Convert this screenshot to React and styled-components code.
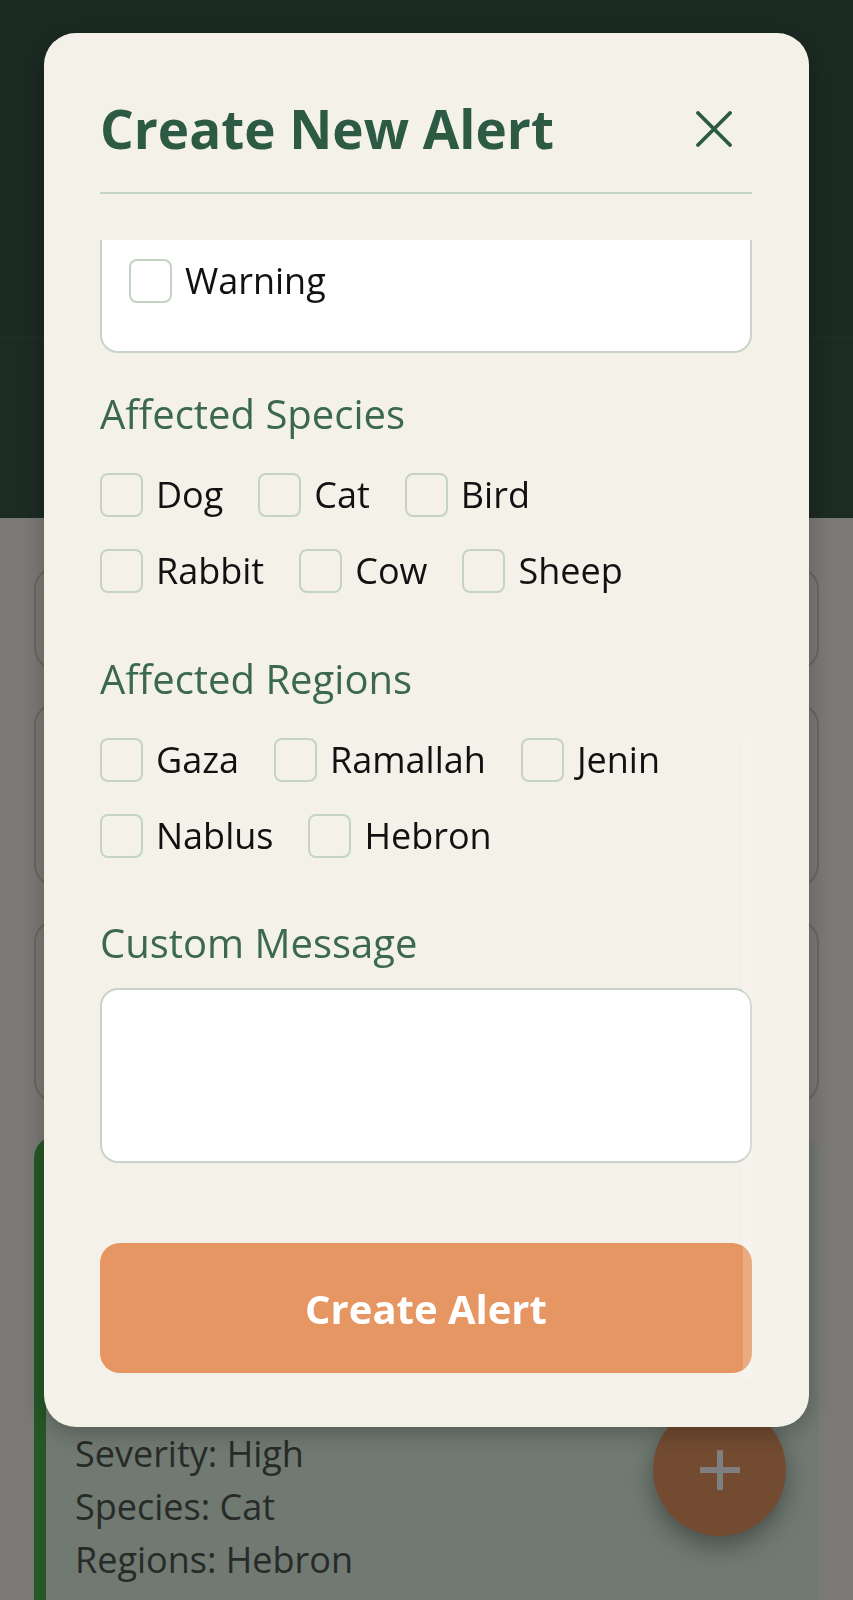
import React, { useLayoutEffect, useRef } from 'react';
import styled, { createGlobalStyle } from 'styled-components';

const GlobalStyle = createGlobalStyle`
  html, body {
    margin: 0;
    padding: 0;
    background: #f5f3ea;
    font-family: "Open Sans", "Noto Sans", sans-serif;
  }
  * { box-sizing: border-box; }
`;

const Page = styled.div`
  min-height: 1600px;
  background: #f5f3ea;
`;

const Header = styled.header`
  height: 337px;
  background: #365444;
  border-bottom: 1px solid rgba(255, 255, 255, 0.06);
`;

const Band = styled.div`
  height: 181px;
  background: #385646;
`;

const List = styled.div`
  display: flex;
  flex-direction: column;
  gap: 33px;
  padding: 49px 34px 0;
`;

const Card = styled.div`
  min-height: ${p => p.$h}px;
  border-radius: 22px;
  border: 2px solid #cfcdc5;
  background: #f5f3ea;
`;

const AlertCard = styled.div`
  min-height: 520px;
  border-radius: 22px;
  background: #e0f2e4;
  border-left: 12px solid #4caf50;
  padding: 29px 29px;
`;

const CardHead = styled.div`
  height: 262px;
  overflow: hidden;
  h3 {
    margin: 0 0 20px;
    font-size: 44px;
    line-height: 60px;
    color: #2d5a43;
  }
  p {
    margin: 0;
    font-size: 36px;
    line-height: 53px;
    color: #4a524c;
  }
`;

const Meta = styled.div`
  font-size: 36px;
  line-height: 53px;
  color: #4f5650;
`;

const Fab = styled.button`
  position: fixed;
  right: 67px;
  bottom: 64px;
  width: 133px;
  height: 133px;
  border-radius: 50%;
  border: none;
  background: #e59662;
  box-shadow: 0 10px 24px rgba(0, 0, 0, 0.35);
  display: flex;
  align-items: center;
  justify-content: center;
  padding: 0;
`;

const Overlay = styled.div`
  position: fixed;
  inset: 0;
  background: rgba(0, 0, 0, 0.5);
  display: flex;
  justify-content: center;
  align-items: flex-start;
  padding-top: 33px;
`;

const Modal = styled.div`
  position: relative;
  width: 765px;
  height: 1394px;
  background: #f4f2e8;
  border-radius: 32px;
  box-shadow: 0 6px 24px rgba(0, 0, 0, 0.25);
  display: flex;
  flex-direction: column;
  padding: 0 57px 54px 56px;
`;

const ModalHeader = styled.div`
  display: flex;
  align-items: center;
  justify-content: space-between;
  height: 161px;
  padding: 58px 0 25px;
  border-bottom: 2px solid #c5d5c5;
`;

const Title = styled.h2`
  margin: 0;
  font-size: 53px;
  line-height: 64px;
  font-weight: 700;
  color: #2d5a43;
`;

const CloseButton = styled.button`
  width: 76px;
  height: 76px;
  border: none;
  background: transparent;
  padding: 0;
  display: flex;
  align-items: center;
  justify-content: center;
`;

const ScrollArea = styled.div`
  position: relative;
  flex: 1;
  min-height: 0;
  margin-top: 46px;
  overflow-y: auto;
  scrollbar-width: none;
  &::-webkit-scrollbar { display: none; }
`;

const ScrollThumb = styled.div`
  position: absolute;
  left: 699px;
  top: 702px;
  width: 9px;
  height: 645px;
  border-radius: 5px;
  background: rgba(255, 255, 255, 0.2);
  pointer-events: none;
`;

const Label = styled.div`
  margin: ${p => p.$top ?? 62}px 0 ${p => p.$bottom ?? 35}px;
  font-size: 40px;
  line-height: 48px;
  color: #3b684e;
`;

const TextInput = styled.input`
  width: 100%;
  height: 100px;
  border: 2px solid #c5d3c5;
  border-radius: 18px;
  background: #fff;
  font: inherit;
  font-size: 36px;
  padding: 0 24px;
`;

const OptionBox = styled.div`
  display: flex;
  flex-direction: column;
  gap: 28px;
  background: #fff;
  border: 2px solid #c8d4c8;
  border-radius: 18px;
  padding: 20px 27px 48px;
`;

const Group = styled.div`
  display: flex;
  flex-wrap: wrap;
  row-gap: 32px;
`;

const Option = styled.label`
  display: inline-flex;
  align-items: center;
  gap: 13px;
  margin-right: ${p => (p.$stack ? 0 : 35)}px;
  font-size: 36px;
  line-height: 44px;
  color: #111;
`;

const Box = styled.input`
  appearance: none;
  margin: 0;
  width: 43px;
  height: 44px;
  border: 2px solid #c5d3c5;
  border-radius: 8px;
  background: transparent;
  flex-shrink: 0;
`;

const MessageInput = styled.textarea`
  display: block;
  width: 100%;
  height: 175px;
  border: 2px solid #c8d4c8;
  border-radius: 18px;
  background: #fff;
  resize: none;
  font: inherit;
  font-size: 36px;
`;

const SubmitButton = styled.button`
  display: block;
  width: 100%;
  height: 130px;
  margin-top: 80px;
  border: none;
  border-radius: 20px;
  background: #e59662;
  color: #fff;
  font-family: inherit;
  font-size: 40px;
  font-weight: 700;
`;

const severities = ['Critical', 'High', 'Medium', 'Warning'];
const species = ['Dog', 'Cat', 'Bird', 'Rabbit', 'Cow', 'Sheep'];
const regions = ['Gaza', 'Ramallah', 'Jenin', 'Nablus', 'Hebron'];

function CheckList({ items }) {
  return (
    <Group>
      {items.map(item => (
        <Option key={item}>
          <Box type="checkbox" />
          {item}
        </Option>
      ))}
    </Group>
  );
}

export default function App() {
  const areaRef = useRef(null);

  // the form is shown scrolled down to the submit button
  useLayoutEffect(() => {
    const area = areaRef.current;
    if (area) area.scrollTop = area.scrollHeight;
  }, []);

  return (
    <>
      <GlobalStyle />
      <Page>
        <Header />
        <Band />
        <List>
          <Card $h={103} />
          <Card $h={184} />
          <Card $h={183} />
          <AlertCard>
            <CardHead>
              <h3>Rabies Outbreak</h3>
              <p>Several confirmed cases reported this week. Keep pets indoors and check vaccinations.</p>
            </CardHead>
            <Meta>Severity: High</Meta>
            <Meta>Species: Cat</Meta>
            <Meta>Regions: Hebron</Meta>
          </AlertCard>
        </List>
        <Fab aria-label="Add alert">
          <svg width="40" height="40" viewBox="0 0 40 40">
            <path d="M20 0v40M0 20h40" stroke="#fff" strokeWidth="6" />
          </svg>
        </Fab>
      </Page>

      <Overlay>
        <Modal>
          <ModalHeader>
            <Title>Create New Alert</Title>
            <CloseButton aria-label="Close">
              <svg width="36" height="36" viewBox="0 0 36 36">
                <path d="M2 2l32 32M34 2L2 34" stroke="#2d5a43" strokeWidth="3.8" strokeLinecap="round" />
              </svg>
            </CloseButton>
          </ModalHeader>

          <ScrollArea ref={areaRef}>
            <Label $top={0} $bottom={21}>Alert Title</Label>
            <TextInput type="text" />
            <Label $top={40} $bottom={21}>Severity</Label>
            <OptionBox>
              {severities.map(s => (
                <Option key={s} $stack>
                  <Box type="checkbox" />
                  {s}
                </Option>
              ))}
            </OptionBox>

            <Label $top={37}>Affected Species</Label>
            <CheckList items={species} />

            <Label>Affected Regions</Label>
            <CheckList items={regions} />

            <Label $top={61} $bottom={21}>Custom Message</Label>
            <MessageInput />

            <SubmitButton>Create Alert</SubmitButton>
          </ScrollArea>
          <ScrollThumb />
        </Modal>
      </Overlay>
    </>
  );
}
